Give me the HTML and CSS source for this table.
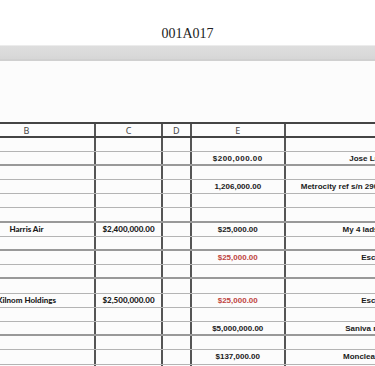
FILE: index.html
```html
<!DOCTYPE html>
<html>
<head>
<meta charset="utf-8">
<link rel="stylesheet" href="styles.css">
</head>
<body>
<div class="title">001A017</div>
<div class="bar"></div>
<div class="page">
  <div class="sheet">
    <div class="row head"><div class="c">B</div><div class="c">C</div><div class="c">D</div><div class="c">E</div><div class="c"></div></div>
    <div class="row"><div class="c"></div><div class="c"></div><div class="c"></div><div class="c"></div><div class="c"></div></div>
    <div class="row dark"><div class="c"></div><div class="c"></div><div class="c"></div><div class="c v wide">$200,000.00</div><div class="c v">Jose Luis Martinez</div></div>
    <div class="row"><div class="c"></div><div class="c"></div><div class="c"></div><div class="c"></div><div class="c"></div></div>
    <div class="row"><div class="c"></div><div class="c"></div><div class="c"></div><div class="c v">1,206,000.00</div><div class="c v">Metrocity ref s/n 29004418 wire transfer sent</div></div>
    <div class="row"><div class="c"></div><div class="c"></div><div class="c"></div><div class="c"></div><div class="c"></div></div>
    <div class="row dark"><div class="c"></div><div class="c"></div><div class="c"></div><div class="c"></div><div class="c"></div></div>
    <div class="row"><div class="c g">Harris Air</div><div class="c g">$2,400,000.00</div><div class="c"></div><div class="c v">$25,000.00</div><div class="c v">My 4 lads Productions</div></div>
    <div class="row dark"><div class="c"></div><div class="c"></div><div class="c"></div><div class="c"></div><div class="c"></div></div>
    <div class="row"><div class="c"></div><div class="c"></div><div class="c"></div><div class="c v red">$25,000.00</div><div class="c v">Escrow Acct</div></div>
    <div class="row dark"><div class="c"></div><div class="c"></div><div class="c"></div><div class="c"></div><div class="c"></div></div>
    <div class="row"><div class="c"></div><div class="c"></div><div class="c"></div><div class="c"></div><div class="c"></div></div>
    <div class="row"><div class="c g">Kilnom Holdings</div><div class="c g">$2,500,000.00</div><div class="c"></div><div class="c v red">$25,000.00</div><div class="c v">Escrow Acct</div></div>
    <div class="row"><div class="c"></div><div class="c"></div><div class="c"></div><div class="c"></div><div class="c"></div></div>
    <div class="row dark"><div class="c"></div><div class="c"></div><div class="c"></div><div class="c v">$5,000,000.00</div><div class="c v">Saniva real estate ltd</div></div>
    <div class="row"><div class="c"></div><div class="c"></div><div class="c"></div><div class="c"></div><div class="c"></div></div>
    <div class="row"><div class="c"></div><div class="c"></div><div class="c"></div><div class="c v">$137,000.00</div><div class="c v">Monclear Investments</div></div>
    <div class="row"><div class="c"></div><div class="c"></div><div class="c"></div><div class="c"></div><div class="c"></div></div>
  </div>
</div>
</body>
</html>
```

FILE: styles.css
```css
html, body {
  margin: 0;
  padding: 0;
  background: #fcfcfc;
  overflow: hidden;
}
body {
  width: 375px;
  height: 366px;
}
.title {
  background: #ffffff;
  padding-top: 26px;
  padding-bottom: 3px;
  height: 16px;
  line-height: 16px;
  text-align: center;
  font-family: "Liberation Serif", serif;
  font-size: 14px;
  color: #222;
}
.bar {
  height: 16px;
  box-sizing: border-box;
  border-top: 1px solid #ececec;
  border-bottom: 2px solid #d0d0d0;
  background: linear-gradient(#dedede, #dadada 60%, #d6d6d6);
}
.page {
  padding-top: 61px;
  overflow: hidden;
}
.sheet {
  margin-left: -41px;
  width: 530px;
  border-top: 2px solid #444;
}
.row {
  display: grid;
  grid-template-columns: 137px 67px 28.5px 94.5px 200px;
  height: 14.2px;
  box-sizing: border-box;
  border-bottom: 1px solid #b4b4b4;
}
.row.dark {
  border-bottom: 2px solid #999;
}
.row.head {
  height: 13.5px;
  border-bottom: 2px solid #444;
}
.c {
  box-sizing: border-box;
  border-right: 2px solid #555;
  text-align: center;
  white-space: nowrap;
  overflow: hidden;
  font-family: "Liberation Sans", sans-serif;
  font-weight: bold;
  font-size: 8px;
  line-height: 13px;
  color: #1a1a1a;
}
.head .c {
  font-family: "Noto Sans", sans-serif;
  font-weight: normal;
  font-size: 9px;
  line-height: 13px;
  color: #444;
}
.c.g {
  font-family: "Lato", sans-serif;
  font-weight: 900;
  font-size: 8px;
  color: #1a1a1a;
}
.c.wide {
  letter-spacing: 0.5px;
}
.c.red {
  color: #c0453f;
}
```
